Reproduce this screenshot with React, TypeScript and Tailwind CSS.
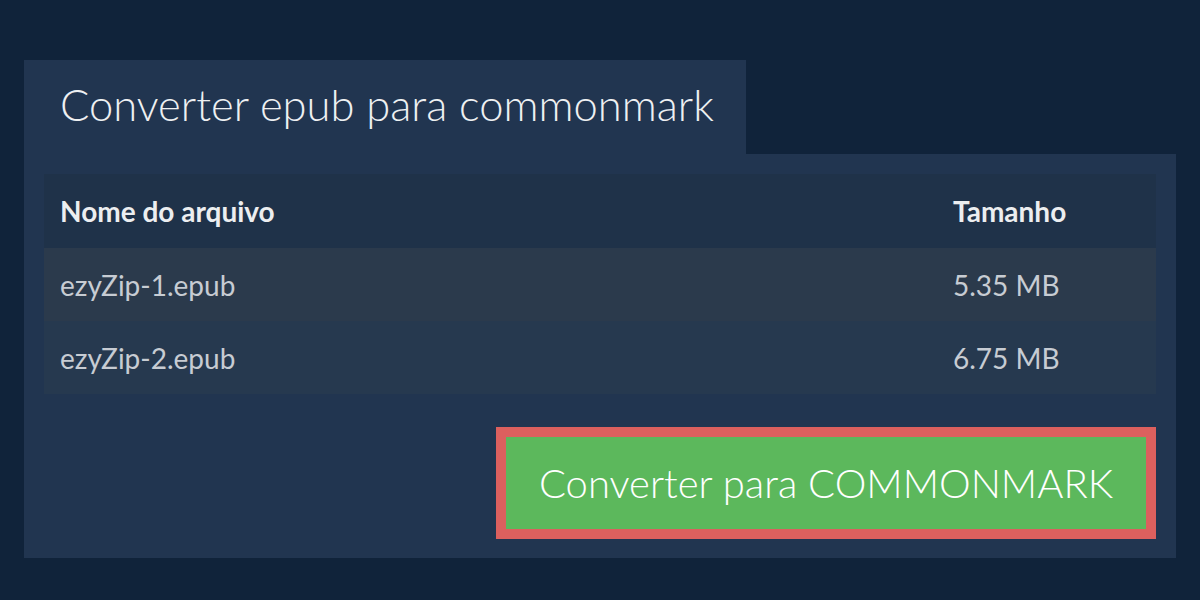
export default function App() {
  const files = [
    { name: "ezyZip-1.epub", size: "5.35 MB", bg: "bg-[#2b3a4c]" },
    { name: "ezyZip-2.epub", size: "6.75 MB", bg: "bg-[#26394f]" },
  ];

  return (
    <div
      className="h-[600px] w-[1200px] bg-[#10233a] pl-6 pt-[60px]"
      style={{ fontFamily: "Lato, 'Open Sans', sans-serif" }}
    >
      <div className="flex h-[94px] w-[722px] items-center bg-[#213550] pb-1 pl-9">
        <h1 className="text-[43.5px] font-light leading-none text-[#eef0f2]">
          Converter epub para commonmark
        </h1>
      </div>

      <div className="w-[1152px] bg-[#213550] p-5 pb-[19px]">
        <table className="w-full border-collapse">
          <thead>
            <tr className="h-[74px] bg-[#1f3249] text-left text-[28px] font-bold text-[#eceef0]">
              <th className="pl-4 font-bold">Nome do arquivo</th>
              <th className="w-[203px] font-bold">Tamanho</th>
            </tr>
          </thead>
          <tbody>
            {files.map((f) => (
              <tr key={f.name} className={`h-[73px] ${f.bg} text-[28px] text-[#c7ccd3]`}>
                <td className="pl-4">{f.name}</td>
                <td>{f.size}</td>
              </tr>
            ))}
          </tbody>
        </table>

        <div className="mt-[33px] flex justify-end">
          <button className="h-[112px] w-[660px] border-[10px] border-[#dc605e] bg-[#5cb85c] text-[40px] font-light text-white">
            Converter para COMMONMARK
          </button>
        </div>
      </div>
    </div>
  );
}
